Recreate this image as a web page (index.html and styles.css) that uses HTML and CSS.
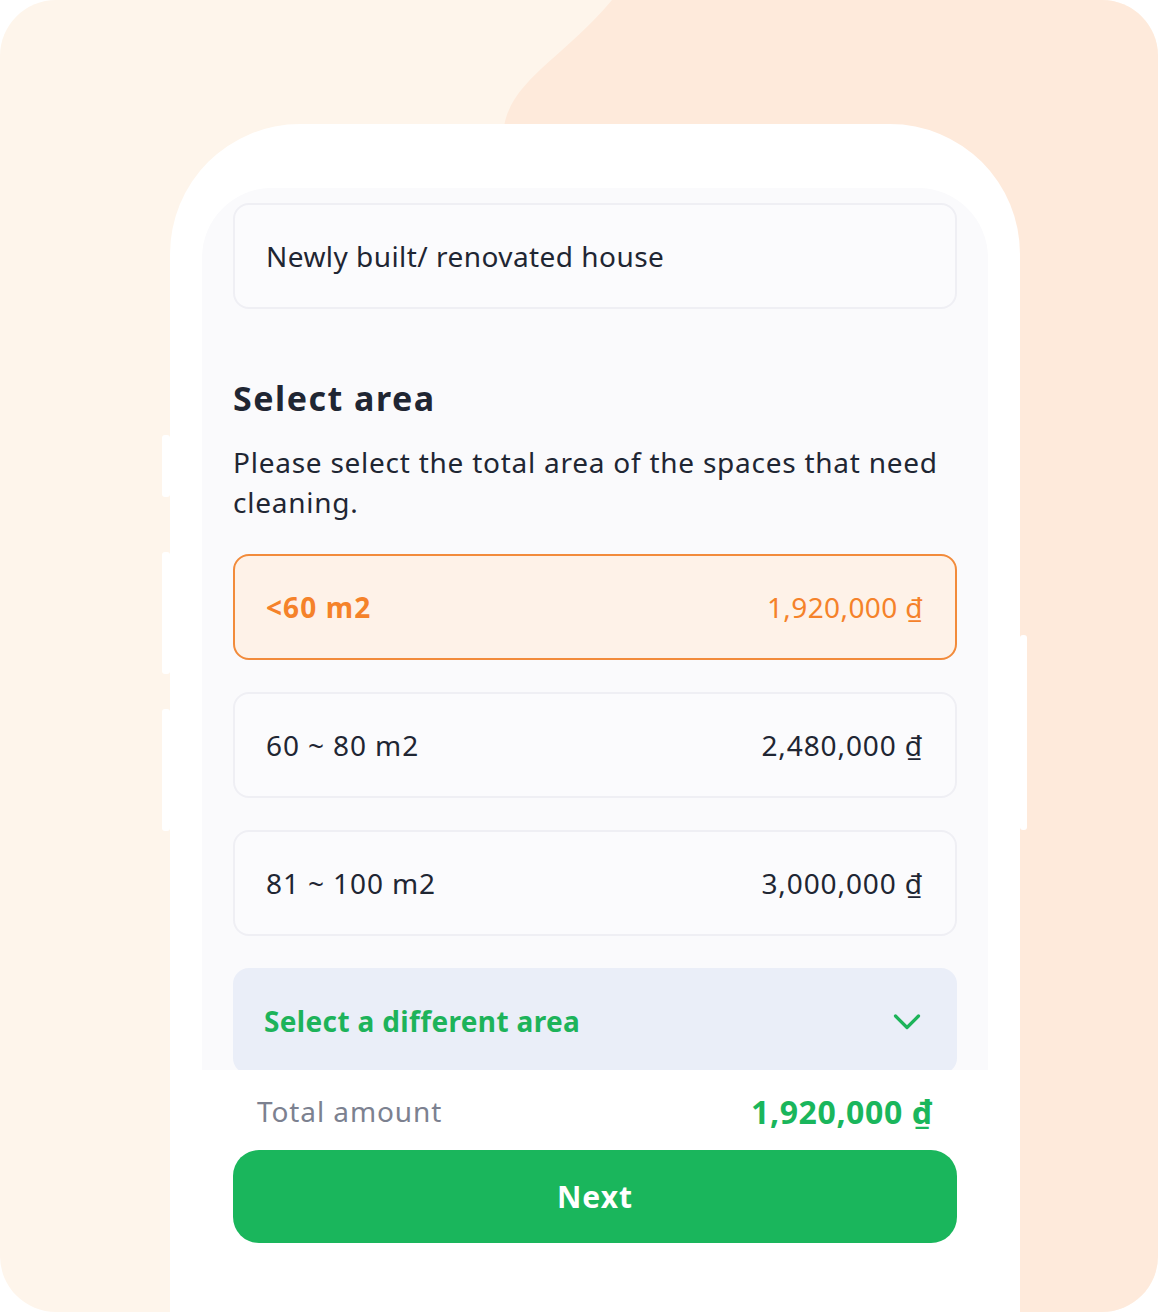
FILE: index.html
```html
<!DOCTYPE html>
<html>
<head>
<meta charset="utf-8">
<link rel="stylesheet" href="styles.css">
</head>
<body>
<div class="canvas">
  <svg class="blob" width="1158" height="1312" viewBox="0 0 1158 1312"><path d="M612 0 C 560 62, 506 82, 503 135 L 503 1312 L 1158 1312 L 1158 0 Z" fill="#FEEADB"/></svg>
  <div class="phone">
    <span class="btn btn-l1"></span>
    <span class="btn btn-l2"></span>
    <span class="btn btn-l3"></span>
    <span class="btn btn-r1"></span>
    <div class="screen">
      <div class="card"><span class="label">Newly built/ renovated house</span></div>
      <h2 class="title">Select area</h2>
      <p class="desc">Please select the total area of the spaces that need cleaning.</p>
      <div class="option selected"><span class="opt-name">&lt;60 m2</span><span class="opt-price">1,920,000 ₫</span></div>
      <div class="option"><span class="opt-name">60 ~ 80 m2</span><span class="opt-price">2,480,000 ₫</span></div>
      <div class="option"><span class="opt-name">81 ~ 100 m2</span><span class="opt-price">3,000,000 ₫</span></div>
      <div class="dropdown"><span class="dd-text">Select a different area</span>
        <svg class="chev" width="28" height="18" viewBox="0 0 28 18"><path d="M2.5 3 L14 14.5 L25.5 3" fill="none" stroke="#1DB35A" stroke-width="3.2" stroke-linecap="round" stroke-linejoin="round"/></svg>
      </div>
    </div>
    <div class="footer">
      <div class="total"><span class="total-label">Total amount</span><span class="total-value">1,920,000 ₫</span></div>
      <div class="next">Next</div>
    </div>
  </div>
</div>
</body>
</html>
```
FILE: styles.css
```css
html, body { margin: 0; padding: 0; background: #ffffff; }
body { font-family: "Noto Sans", "DejaVu Sans", sans-serif; color: #1F2633; }
.canvas {
  position: relative;
  width: 1158px;
  height: 1312px;
  border-radius: 56px;
  overflow: hidden;
  background: #FEF5EB;
}
.blob { position: absolute; left: 0; top: 0; }
.phone {
  position: absolute;
  left: 170px;
  top: 124px;
  width: 850px;
  height: 1188px;
  background: #ffffff;
  border-radius: 130px 130px 0 0;
  padding: 64px 32px 0 32px;
  box-sizing: border-box;
}
.btn { position: absolute; background: #ffffff; width: 8px; border-radius: 3px; }
.btn-l1 { left: -8px; top: 311px; height: 62px; }
.btn-l2 { left: -8px; top: 428px; height: 122px; }
.btn-l3 { left: -8px; top: 585px; height: 122px; }
.btn-r1 { right: -7px; top: 511px; height: 195px; width: 7px; }
.screen {
  height: 882px;
  background: #FAFAFC;
  border-radius: 70px 70px 0 0;
  padding: 15px 31px 0 31px;
  overflow: hidden;
  box-sizing: border-box;
}
.card, .option, .dropdown {
  height: 106px;
  box-sizing: border-box;
  border-radius: 16px;
  display: flex;
  align-items: center;
  justify-content: space-between;
  padding: 0 32px 0 31px;
}
.card { border: 2px solid #EFEFF4; background: #FBFBFD; }
.label { font-size: 28px; letter-spacing: 0.45px; color: #1F2633; }
.title {
  margin: 69px 0 0 0;
  font-size: 34px;
  line-height: 40px;
  font-weight: 700;
  letter-spacing: 1.5px;
  color: #1F2633;
}
.desc {
  margin: 24px 0 0 0;
  font-size: 28px;
  line-height: 40px;
  letter-spacing: 0.75px;
  color: #1F2633;
}
.option {
  margin-top: 32px;
  border: 2px solid #EFEFF4;
  background: #FBFBFD;
  font-size: 28px;
  letter-spacing: 0.9px;
}
.option.selected { border-color: #F28B3B; background: #FEF2E8; }
.option.selected .opt-name { color: #F5822A; font-weight: 700; letter-spacing: 1.1px; }
.option.selected .opt-price { color: #F5822A; letter-spacing: 0.4px; }
.opt-name, .opt-price { color: #1F2633; }
.dropdown {
  margin-top: 32px;
  background: #EAEEF8;
  padding: 0 36px 0 31px;
}
.dd-text { font-size: 28px; font-weight: 700; letter-spacing: 0.35px; color: #1DB35A; }
.chev { display: block; margin-top: 2px; }
.footer { padding: 20px 31px 0 31px; }
.total {
  display: flex;
  justify-content: space-between;
  align-items: center;
  padding: 0 24px;
  height: 42px;
}
.total-label { font-size: 28px; letter-spacing: 0.9px; color: #7C8190; }
.total-value { font-size: 32px; font-weight: 700; letter-spacing: 0.6px; color: #1AB65C; }
.next {
  margin-top: 18px;
  height: 93px;
  border-radius: 26px;
  background: #1AB65C;
  color: #ffffff;
  font-size: 30px;
  font-weight: 700;
  letter-spacing: 1px;
  display: flex;
  align-items: center;
  justify-content: center;
}
```
